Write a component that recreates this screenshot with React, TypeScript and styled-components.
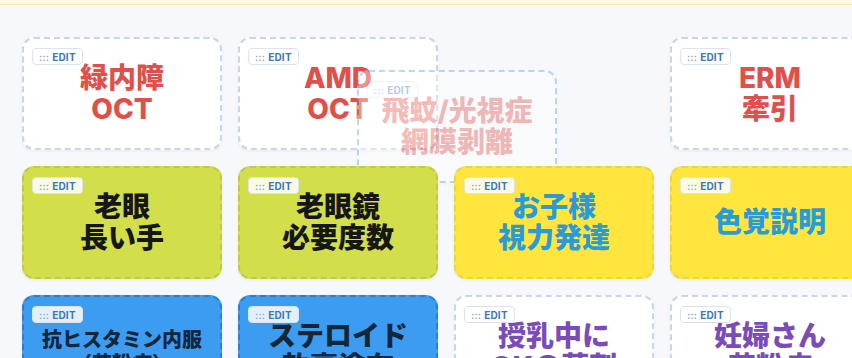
import * as React from 'react';
import styled, { createGlobalStyle } from 'styled-components';

const GlobalStyle = createGlobalStyle`
    html, body {
        margin: 0;
        padding: 0;
        background: #f6f8fb;
        overflow: hidden;
        font-family: "Inter", "Noto Sans CJK JP", sans-serif;
    }
`;

const TopBar = styled.div`
    height: 4px;
    background: #fff8e6;
    border-bottom: 1px solid #fae5b3;
`;

const Board = styled.div`
    display: grid;
    grid-template-columns: repeat(4, 200px);
    grid-auto-rows: 113px;
    gap: 16px;
    padding: 32px 22px;
    width: max-content;
`;

type Tone = 'white' | 'lime' | 'yellow' | 'blue';

const tileBg: Record<Tone, string> = {
    white: '#ffffff',
    lime: '#d3df4a',
    yellow: '#ffe53d',
    blue: '#3c9df0'
};

const tileBorder: Record<Tone, string> = {
    white: '#c9d6e3',
    lime: '#bfcb45',
    yellow: '#ecd447',
    blue: '#2d7fcc'
};

const Tile = styled.div<{ $tone: Tone, $dragging?: boolean }>`
    position: relative;
    box-sizing: border-box;
    display: flex;
    align-items: center;
    justify-content: center;
    border-radius: 12px;
    border: 2px dashed ${props => props.$dragging ? '#4d9be0' : tileBorder[props.$tone]};
    background: ${props => tileBg[props.$tone]};
    box-shadow: 0 1px 3px rgba(30, 50, 80, 0.07);
    opacity: ${props => props.$dragging ? 0.38 : 1};
`;

const Handle = styled.div`
    position: absolute;
    top: 9px;
    left: 8px;
    display: flex;
    align-items: center;
    gap: 3px;
    height: 15px;
    padding: 0 6px;
    border-radius: 4px;
    border: 1px solid #dbe4ee;
    background: rgba(255, 255, 255, 0.85);
    font-family: "Inter", "Noto Sans", sans-serif;
    font-size: 10px;
    font-weight: 700;
    letter-spacing: 0.2px;
    color: #3d78b6;
    line-height: 1;
`;

const Dots = styled.span`
    color: #8ea7c2;
    font-weight: 600;
`;

const Label = styled.div<{ $color: string, $size: number }>`
    white-space: pre-line;
    text-align: center;
    font-weight: 800;
    color: ${props => props.$color};
    font-size: ${props => props.$size}px;
    line-height: ${props => props.$size < 24 ? 1.2 : 1.08};
`;

interface Item {
    id: string;
    text: string;
    tone: Tone;
    color: string;
    size?: number;
    drag?: { x: number, y: number };
}

const RED = '#e0504a';
const INK = '#161616';
const SKY = '#2a9bd9';
const NAVY = '#14263a';
const PURPLE = '#7a4cb9';

const items: Item[] = [
    { id: 'glaucoma', text: '緑内障\nOCT', tone: 'white', color: RED },
    { id: 'amd', text: 'AMD\nOCT', tone: 'white', color: RED },
    { id: 'floaters', text: '飛蚊/光視症\n網膜剥離', tone: 'white', color: RED, drag: { x: -97, y: 33 } },
    { id: 'erm', text: 'ERM\n牽引', tone: 'white', color: RED },
    { id: 'presbyopia', text: '老眼\n長い手', tone: 'lime', color: INK },
    { id: 'reading', text: '老眼鏡\n必要度数', tone: 'lime', color: INK },
    { id: 'kids', text: 'お子様\n視力発達', tone: 'yellow', color: SKY },
    { id: 'color', text: '色覚説明', tone: 'yellow', color: SKY },
    { id: 'antihistamine', text: '抗ヒスタミン内服\n（花粉症）', tone: 'blue', color: NAVY, size: 20 },
    { id: 'steroid', text: 'ステロイド\n軟膏塗布', tone: 'blue', color: NAVY },
    { id: 'nursing', text: '授乳中に\nOKの薬剤', tone: 'white', color: PURPLE },
    { id: 'pregnant', text: '妊婦さん\n花粉症', tone: 'white', color: PURPLE }
];

export default function App() {
    return (
        <>
            <GlobalStyle />
            <TopBar />
            <Board>
                {items.map(item =>
                    <Tile
                        key={item.id}
                        $tone={item.tone}
                        $dragging={!!item.drag}
                        style={item.drag ? { transform: `translate(${item.drag.x}px, ${item.drag.y}px)` } : undefined}>
                        <Handle><Dots>:::</Dots>EDIT</Handle>
                        <Label $color={item.color} $size={item.size || 28}>{item.text}</Label>
                    </Tile>)}
            </Board>
        </>
    );
}
